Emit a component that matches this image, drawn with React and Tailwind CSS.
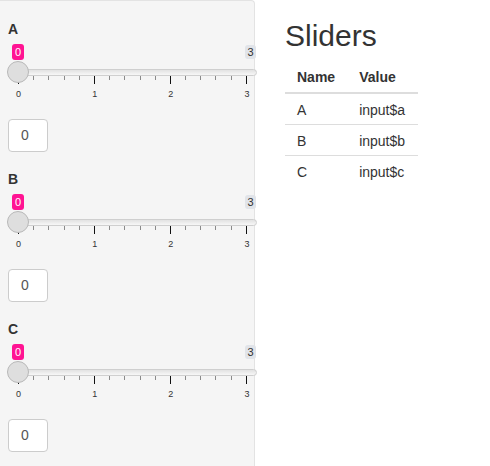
import React from "react";

const TICKS = Array.from({ length: 16 }, (_, i) => i);

function Slider() {
  return (
    <div className="flex h-[62px] w-[249px] flex-col">
      <div className="mt-[5px] flex h-[16px] items-center justify-between pl-[4px] pr-[1px]">
        <div className="h-[16px] w-[12px] rounded-[3px] bg-[#ff1493] text-center text-[11px] leading-[16px] text-white">
          0
        </div>
        <div className="h-[14px] w-[11px] rounded-[3px] bg-[#e1e4e9] text-center text-[11px] leading-[14px] text-[#333]">
          3
        </div>
      </div>
      <div className="relative mt-[9px] pl-[2px]">
        <div className="h-[7px] rounded-full border border-[#cfcfcf] bg-gradient-to-b from-[#e2e2e2] to-[#f7f7f7]" />
        <div className="absolute left-[-1px] top-[-8px] h-[22px] w-[22px] rounded-full border border-[#b8b8b8] bg-[#dedede]" />
      </div>
      <div className="flex w-[239px] items-start justify-between pl-[10px]">
        {TICKS.map((t) => (
          <div
            key={t}
            className={t % 5 === 0 ? "h-[8px] w-px bg-[#111]" : "h-[4px] w-px bg-[#8a8a8a]"}
          />
        ))}
      </div>
      <div className="mt-[5px] flex w-[249px] justify-between pl-[0.5px]">
        {[0, 1, 2, 3].map((m) => (
          <div key={m} className="w-[20px] text-center text-[9px] leading-[10px] text-[#333]">
            {m}
          </div>
        ))}
      </div>
    </div>
  );
}

function Section({ label }) {
  return (
    <div className="mb-[17px]">
      <div className="h-[20px] text-[14px] font-bold leading-[20px] text-[#333]">{label}</div>
      <Slider />
      <div className="mt-[18px] flex h-[33px] w-[40px] items-center rounded-[4px] border border-[#cccccc] bg-white pl-[12px] text-[14px] text-[#555]">
        0
      </div>
    </div>
  );
}

export default function App() {
  return (
    <div
      className="flex h-[466px] w-[490px] overflow-hidden bg-white text-[#333]"
      style={{ fontFamily: '"Liberation Sans", Arial, sans-serif' }}
    >
      <div className="h-[466px] w-[255px] shrink-0 rounded-tr-[4px] border-r border-t border-[#e3e3e3] bg-[#f5f5f5] pl-[8px] pt-[18px]">
        <Section label="A" />
        <Section label="B" />
        <Section label="C" />
      </div>
      <div className="ml-[30px] pt-[19px]">
        <h2 className="h-[33px] text-[30px] font-medium leading-[33px] text-[#333]">Sliders</h2>
        <table className="mt-[10px] border-collapse text-[14px] leading-[20px] text-[#333]">
          <thead>
            <tr className="border-b-2 border-[#dddddd]">
              <th className="px-[12px] pb-[5px] pt-[5px] text-left font-bold">Name</th>
              <th className="pl-[12px] pr-[13px] pb-[5px] pt-[5px] text-left font-bold">Value</th>
            </tr>
          </thead>
          <tbody>
            {[
              ["A", "input$a"],
              ["B", "input$b"],
              ["C", "input$c"],
            ].map(([n, v], i) => (
              <tr key={n} className={i === 0 ? "" : "border-t border-[#dddddd]"}>
                <td className="px-[12px] pb-[4px] pt-[6px]">{n}</td>
                <td className="pl-[12px] pr-[13px] pb-[4px] pt-[6px]">{v}</td>
              </tr>
            ))}
          </tbody>
        </table>
      </div>
    </div>
  );
}
